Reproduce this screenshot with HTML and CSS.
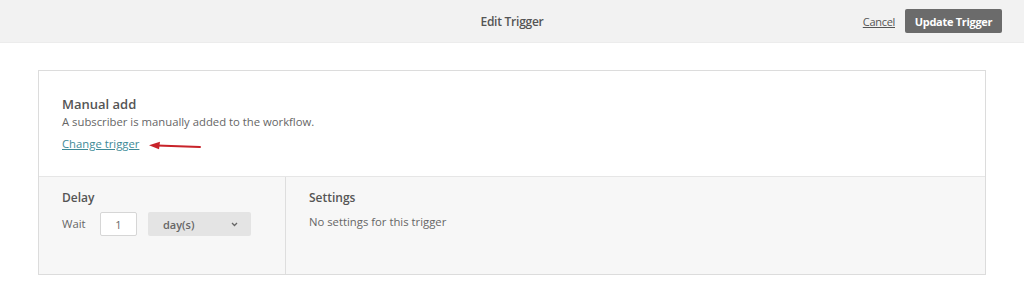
FILE: index.html
```html
<!DOCTYPE html>
<html>
<head>
<meta charset="utf-8">
<link rel="stylesheet" href="styles.css">
</head>
<body>
<header class="topbar">
  <div class="title">Edit Trigger</div>
  <div class="actions">
    <a class="cancel" href="#">Cancel</a>
    <button class="update">Update Trigger</button>
  </div>
</header>
<main class="content">
  <section class="card">
    <div class="card-top">
      <h2 class="trig-name">Manual add</h2>
      <p class="trig-desc">A subscriber is manually added to the workflow.</p>
      <div class="change-row">
        <a class="change" href="#">Change trigger</a>
        <svg class="arrow" width="52" height="10" viewBox="0 0 52 10">
          <line x1="8" y1="4.5" x2="51" y2="6" stroke="#c8232a" stroke-width="2" stroke-linecap="round"/>
          <polygon points="0,4.2 11,0.8 10,8.2" fill="#c8232a"/>
        </svg>
      </div>
    </div>
    <div class="card-bottom">
      <div class="delay">
        <h3 class="sub">Delay</h3>
        <div class="wait-row">
          <span class="wait">Wait</span>
          <span class="num">1</span>
          <span class="select">day(s)
            <svg class="chev" width="7" height="5" viewBox="0 0 7 5"><path d="M1 1 L3.5 3.5 L6 1" fill="none" stroke="#666" stroke-width="1.3"/></svg>
          </span>
        </div>
      </div>
      <div class="settings">
        <h3 class="sub">Settings</h3>
        <p class="none">No settings for this trigger</p>
      </div>
    </div>
  </section>
</main>
</body>
</html>
```
FILE: styles.css
```css
* { box-sizing: border-box; }
html, body { margin: 0; padding: 0; background: #fff; }
body { font-family: "Open Sans", "Liberation Sans", sans-serif; color: #555; }

.topbar {
  height: 43px;
  background: #f2f2f2;
  border-bottom: 1px solid #ececec;
  position: relative;
  display: flex;
  align-items: center;
  justify-content: center;
}
.title {
  font-size: 12px;
  font-weight: 600;
  color: #555;
  letter-spacing: -0.25px;
}
.actions {
  position: absolute;
  right: 22px;
  top: 9px;
  display: flex;
  align-items: center;
  gap: 10px;
}
.cancel {
  font-size: 11px;
  color: #555;
  text-decoration: underline;
  letter-spacing: -0.3px;
}
.update {
  width: 97px;
  height: 24px;
  border: 0;
  border-radius: 2px;
  background: #6b6b6b;
  color: #fff;
  font-family: inherit;
  font-size: 11px;
  font-weight: 700;
  letter-spacing: -0.3px;
  padding: 0;
}

.content { padding: 27px 38px 0 38px; }
.card {
  border: 1px solid #dcdcdc;
  width: 948px;
}
.card-top {
  height: 106px;
  padding: 25px 23px 0 23px;
  border-bottom: 1px solid #e6e6e6;
  background: #fff;
}
.trig-name {
  margin: 0;
  font-size: 13px;
  font-weight: 600;
  color: #555;
  line-height: 17px;
}
.trig-desc {
  margin: 1px 0 0 0;
  font-size: 11.3px;
  line-height: 16px;
  color: #666;
}
.change-row {
  margin-top: 6px;
  display: flex;
  align-items: center;
  gap: 10px;
}
.change {
  font-size: 11.3px;
  color: #3e8a97;
  text-decoration: underline;
  line-height: 16px;
}
.arrow { display: block; margin-top: 4px; }

.card-bottom {
  display: flex;
  height: 97px;
  background: #f7f7f7;
}
.delay {
  width: 247px;
  border-right: 1px solid #dedede;
  padding: 12px 23px 0 23px;
}
.settings {
  flex: 1;
  padding: 12px 23px 0 23px;
}
.sub {
  margin: 0;
  font-size: 12px;
  font-weight: 600;
  color: #555;
  line-height: 17px;
}
.wait-row {
  margin-top: 6px;
  display: flex;
  align-items: center;
}
.wait {
  font-size: 11.3px;
  color: #666;
  width: 38px;
  margin-top: -2px;
}
.num {
  width: 37px;
  height: 24px;
  border: 1px solid #d6d6d6;
  border-radius: 2px;
  background: #fff;
  font-size: 11px;
  color: #666;
  display: flex;
  align-items: center;
  justify-content: center;
}
.select {
  margin-left: 11px;
  width: 103px;
  height: 24px;
  border-radius: 2px;
  background: #e4e4e4;
  font-size: 11px;
  font-weight: 600;
  color: #666;
  display: flex;
  align-items: center;
  justify-content: space-between;
  padding: 0 13px 0 15px;
}
.none {
  margin: 8px 0 0 0;
  font-size: 11.3px;
  color: #666;
}
```
